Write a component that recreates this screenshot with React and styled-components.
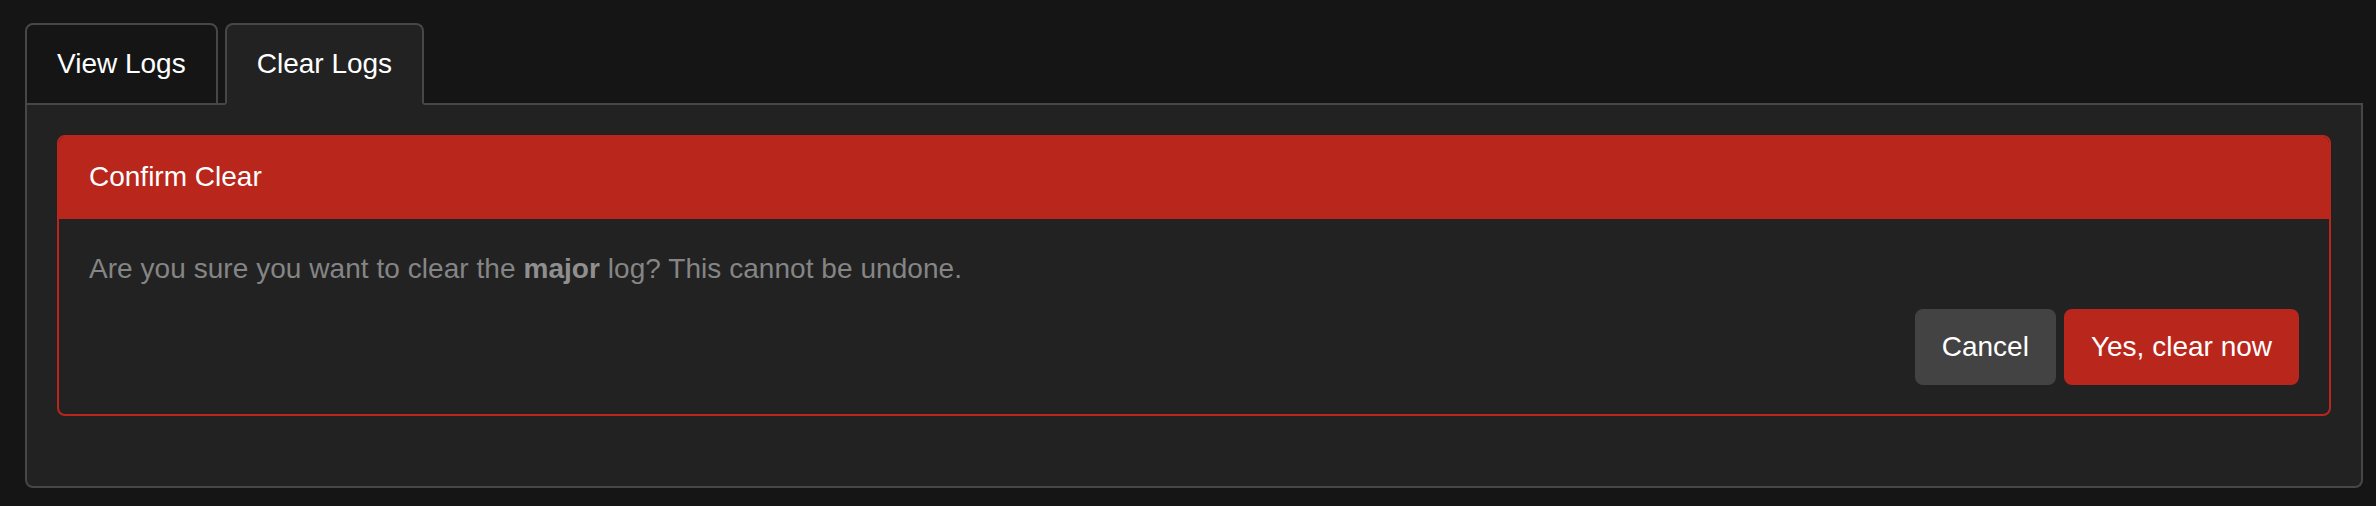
import React, { useState } from "react";
import styled, { createGlobalStyle } from "styled-components";

const GlobalStyle = createGlobalStyle`
  html, body {
    margin: 0;
    padding: 0;
    background: #151515;
  }
  body {
    font-family: "Liberation Sans", Arial, Helvetica, sans-serif;
    font-size: 28px;
    color: #ffffff;
  }
  * { box-sizing: border-box; }
`;

const Page = styled.div`
  padding: 23px 13px 17px 25px;
`;

const TabList = styled.div`
  display: flex;
  gap: 7px;
  border-bottom: 2px solid #474747;
`;

const Tab = styled.button`
  position: relative;
  margin-bottom: -2px;
  padding: 19px 30px;
  font-family: inherit;
  font-size: 28px;
  line-height: 40px;
  color: #ffffff;
  background: ${(p) => (p.$active ? "#222222" : "#151515")};
  border: 2px solid #474747;
  border-bottom-color: ${(p) => (p.$active ? "#222222" : "#474747")};
  border-radius: 8px 8px 0 0;
  cursor: pointer;
`;

const Panel = styled.div`
  background: #222222;
  border: 2px solid #474747;
  border-top: none;
  border-radius: 0 0 8px 8px;
  padding: 30px;
`;

const Card = styled.div`
  border: 2px solid #b8261c;
  border-radius: 8px;
  overflow: hidden;
  margin-bottom: 40px;
`;

const CardHeader = styled.div`
  background: #b8261c;
  padding: 20px 30px;
  line-height: 40px;
  font-size: 28px;
  color: #ffffff;
  border-bottom: 2px solid #b8261c;
`;

const CardBody = styled.div`
  padding: 30px 30px 29px;
`;

const Message = styled.p`
  margin: 0 0 20px;
  line-height: 40px;
  font-size: 28px;
  color: #858585;
  letter-spacing: 0.05px;
  strong {
    font-weight: bold;
    color: #8f8f8f;
  }
`;

const Actions = styled.div`
  display: flex;
  justify-content: flex-end;
  gap: 8px;
`;

const Button = styled.button`
  padding: 16px 25px;
  font-family: inherit;
  font-size: 28px;
  line-height: 40px;
  color: #ffffff;
  background: ${(p) => (p.$danger ? "#b9261c" : "#434343")};
  border: 2px solid ${(p) => (p.$danger ? "#b9261c" : "#434343")};
  border-radius: 8px;
  cursor: pointer;
`;

export default function App() {
  const [tab, setTab] = useState("clear");
  return (
    <>
      <GlobalStyle />
      <Page>
        <TabList>
          <Tab $active={tab === "view"} onClick={() => setTab("view")}>
            View Logs
          </Tab>
          <Tab $active={tab === "clear"} onClick={() => setTab("clear")}>
            Clear Logs
          </Tab>
        </TabList>
        <Panel>
          <Card>
            <CardHeader>Confirm Clear</CardHeader>
            <CardBody>
              <Message>
                Are you sure you want to clear the <strong>major</strong> log?
                This cannot be undone.
              </Message>
              <Actions>
                <Button>Cancel</Button>
                <Button $danger>Yes, clear now</Button>
              </Actions>
            </CardBody>
          </Card>
        </Panel>
      </Page>
    </>
  );
}
